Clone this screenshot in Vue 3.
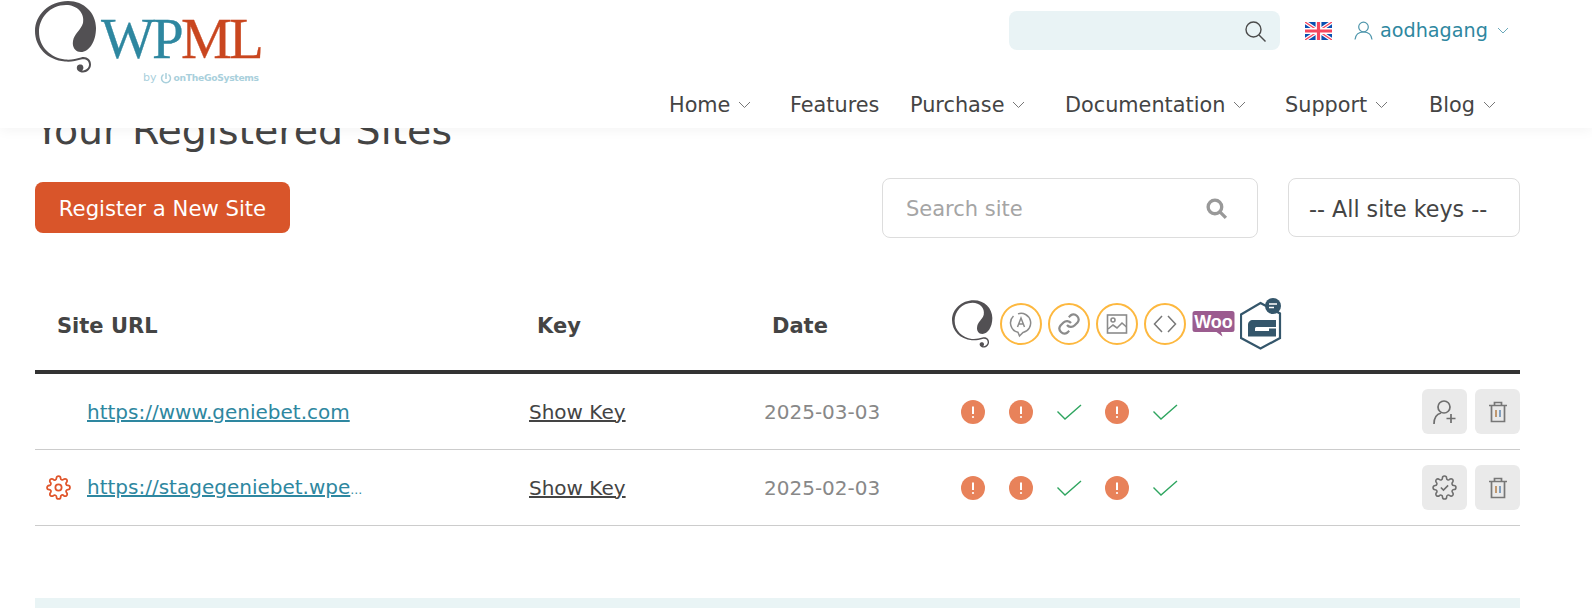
<script setup>
const spiral = "M68 1C84 1 96 13 96 28C96 42 89 52 81 52C75 52 72 47 73 41C74 34 81 30 83 23C85 13 77 5 66 5C50 5 39 18 39 32C39 47 51 58 65 59.500C71 60 76 59 81 57.500C86 56 91 59 91 64.500C91 69 87 72.500 83 72.500C79 72.500 76 70 77 66.500C78 64 82 64 83 66C84 68 83 70 82 70.500C86 70.500 89 68 89 64.500C89 60 85 58.500 81 59.500C76 61 71 62 65 61.500C47 60 35 47 35 31C35 15 49 1 68 1Z";
const gear = "M19.4 15a1.65 1.65 0 0 0 .33 1.82l.06.06a2 2 0 0 1 0 2.83 2 2 0 0 1-2.83 0l-.06-.06a1.65 1.65 0 0 0-1.82-.33 1.65 1.65 0 0 0-1 1.51V21a2 2 0 0 1-2 2 2 2 0 0 1-2-2v-.09A1.65 1.65 0 0 0 9 19.4a1.65 1.65 0 0 0-1.82.33l-.06.06a2 2 0 0 1-2.83 0 2 2 0 0 1 0-2.83l.06-.06a1.65 1.65 0 0 0 .33-1.82 1.65 1.65 0 0 0-1.51-1H3a2 2 0 0 1-2-2 2 2 0 0 1 2-2h.09A1.65 1.65 0 0 0 4.6 9a1.65 1.65 0 0 0-.33-1.82l-.06-.06a2 2 0 0 1 0-2.83 2 2 0 0 1 2.83 0l.06.06a1.65 1.65 0 0 0 1.82.33H9a1.65 1.65 0 0 0 1-1.51V3a2 2 0 0 1 2-2 2 2 0 0 1 2 2v.09a1.65 1.65 0 0 0 1 1.51 1.65 1.65 0 0 0 1.82-.33l.06-.06a2 2 0 0 1 2.83 0 2 2 0 0 1 0 2.83l-.06.06a1.65 1.65 0 0 0-.33 1.82V9a1.65 1.65 0 0 0 1.51 1H21a2 2 0 0 1 2 2 2 2 0 0 1-2 2h-.09a1.65 1.65 0 0 0-1.51 1z";
const nav = [
  { label: "Home", caret: true, w: 121 },
  { label: "Features", caret: false, w: 120 },
  { label: "Purchase", caret: true, w: 155 },
  { label: "Documentation", caret: true, w: 220 },
  { label: "Support", caret: true, w: 144 },
  { label: "Blog", caret: true, w: 0 },
];
const status = ["warn", "warn", "ok", "warn", "ok"];
const sites = [
  { url: "https://www.geniebet.com", more: "", date: "2025-03-03", gear: false },
  { url: "https://stagegeniebet.wpe", more: "…", date: "2025-02-03", gear: true },
];
</script>

<template>
  <div class="page">
    <header class="top">
      <div class="logo">
        <svg class="logo-mark" viewBox="35 0 62 74"><path :d="spiral" fill="#525053" /></svg>
        <div class="logo-word"><span class="wp">WP</span><span class="ml">ML</span></div>
        <div class="logo-by">
          <span class="by">by</span>
          <svg width="12" height="12" viewBox="0 0 12 12" fill="none" stroke="#a9d0dc" stroke-width="1.500"><path d="M3.500 2.500a4.500 4.500 0 1 0 5 0M6 1v6" /></svg>
          <b>onTheGoSystems</b>
        </div>
      </div>
      <div class="top-right">
        <div class="utility">
          <div class="top-search">
            <svg width="24" height="24" viewBox="0 0 24 24" fill="none" stroke="#4b4b4b" stroke-width="1.400"><circle cx="10.500" cy="10.500" r="7.500" /><path d="M16 16l6.500 6.500" /></svg>
          </div>
          <svg class="flag" width="27" height="18" viewBox="0 0 60 40">
            <rect width="60" height="40" fill="#0a4fb0" />
            <path d="M0 0L60 40M60 0L0 40" stroke="#fff" stroke-width="8" />
            <path d="M0 0L60 40M60 0L0 40" stroke="#f5475e" stroke-width="3" />
            <path d="M30 0V40M0 20H60" stroke="#fff" stroke-width="13" />
            <path d="M30 0V40M0 20H60" stroke="#f5475e" stroke-width="7" />
          </svg>
          <svg class="user" width="19" height="19" viewBox="0 0 19 19" fill="none" stroke="#4e96ac" stroke-width="1.200"><circle cx="9.500" cy="6" r="4.800" /><path d="M1 18.500c.5-4.500 3.500-7.500 8.500-7.500s8 3 8.500 7.500" /></svg>
          <span class="username">aodhagang</span>
          <svg class="caret teal" width="12" height="7" viewBox="0 0 12 7" fill="none"><path d="M1 1l5 5 5-5" /></svg>
        </div>
        <nav class="nav">
          <a v-for="n in nav" :key="n.label" class="nav-item" :style="n.w ? { width: n.w + 'px' } : null">
            {{ n.label }}
            <svg v-if="n.caret" class="caret" width="13" height="8" viewBox="0 0 13 8" fill="none"><path d="M1 1l5.500 5.500L12 1" /></svg>
          </a>
        </nav>
      </div>
    </header>

    <main class="content">
      <h1 class="title">Your Registered Sites</h1>
      <div class="tools">
        <button class="register">Register a New Site</button>
        <div class="search">
          <input placeholder="Search site" />
          <svg width="23" height="23" viewBox="0 0 22 22" fill="none" stroke="#999" stroke-width="3.200"><circle cx="9.500" cy="9.500" r="6.500" /><path d="M14.500 14.500l5.500 5.500" /></svg>
        </div>
        <select class="keys"><option>-- All site keys --</option></select>
      </div>

      <div class="thead">
        <div class="th first">Site URL</div>
        <div class="th pad">Key</div>
        <div class="th pad">Date</div>
        <div class="head-icons">
          <svg class="h-spiral" width="41" height="50" viewBox="35 0 62 74"><path :d="spiral" fill="#525053" /></svg>
          <span class="ring">
            <svg width="26" height="28" viewBox="0 0 26 28" fill="none" stroke="#8b8b8b" stroke-width="1.500"><path d="M10 3.900A9.600 9.600 0 1 1 15 22.400L11.500 26 10 22.300A9.600 9.600 0 0 1 5.500 6" /><path d="M9.500 17L13 8l3.500 9M10.800 14h4.400" /></svg>
          </span>
          <span class="ring">
            <svg width="24" height="24" viewBox="0 0 24 24" fill="none" stroke="#8b8b8b" stroke-width="2.200"><path d="M10 13a5 5 0 0 0 7.500.5l3-3a5 5 0 0 0-7-7l-1.700 1.700" /><path d="M14 11a5 5 0 0 0-7.500-.5l-3 3a5 5 0 0 0 7 7l1.700-1.700" /></svg>
          </span>
          <span class="ring">
            <svg width="22" height="22" viewBox="0 0 22 22" fill="none" stroke="#8b8b8b" stroke-width="1.600"><rect x="1.500" y="2" width="19" height="18" /><circle cx="7" cy="7" r="2" /><path d="M2 16l5-4 4 3 5-5 4.500 4" /></svg>
          </span>
          <span class="ring">
            <svg width="24" height="20" viewBox="0 0 24 20" fill="none" stroke="#777" stroke-width="1.500"><path d="M9 2L1.500 10 9 18M15 2l7.500 8L15 18" /></svg>
          </span>
          <svg class="woo" width="43" height="27" viewBox="0 0 43 27">
            <path d="M3 1h37a2.500 2.500 0 0 1 2.500 2.500v16a2.500 2.500 0 0 1-2.500 2.500H29l1.500 4.500-6-4.500H3A2.500 2.500 0 0 1 .5 19.500v-16A2.500 2.500 0 0 1 3 1z" fill="#9b5c8f" />
            <text x="21.500" y="18" text-anchor="middle" class="woo-text">Woo</text>
          </svg>
          <svg class="gf" width="42" height="52" viewBox="0 0 42 52">
            <path d="M20.500 5L40 15.500V40L20.500 50.500 1 40V16.500z" fill="#fff" stroke="#34566b" stroke-width="2.200" />
            <path d="M13 22H36V29H17c-1.500 0-2 .5-2 2V33H29V30.500H36V38.500H8V27c0-3 2-5 5-5z" fill="#34566b" />
            <circle cx="33" cy="8" r="8" fill="#34566b" />
            <path d="M29 6h8M29 9.500h5" stroke="#fff" stroke-width="1.500" />
          </svg>
        </div>
      </div>

      <div v-for="s in sites" :key="s.url" class="row">
        <div class="url-cell">
          <span class="gear-slot">
            <svg v-if="s.gear" width="25" height="25" viewBox="0 0 24 24" fill="none" stroke="#e0552b" stroke-width="1.700"><circle cx="12" cy="12" r="3" /><path :d="gear" /></svg>
          </span>
          <a class="url">{{ s.url }}</a><span class="url-more">{{ s.more }}</span>
        </div>
        <div><a class="showkey">Show Key</a></div>
        <div class="date">{{ s.date }}</div>
        <div class="statuses">
          <span v-for="(st, i) in status" :key="i" class="slot">
            <svg v-if="st === 'warn'" width="24" height="24" viewBox="0 0 24 24"><circle cx="12" cy="12" r="12" fill="#e8825a" /><path d="M12 6.500v7.500" stroke="#fff" stroke-width="2" /><circle cx="12" cy="17" r="1.100" fill="#fff" /></svg>
            <svg v-else width="26" height="18" viewBox="0 0 26 18" fill="none" stroke="#2ea55f" stroke-width="1.400"><path d="M1.500 8.500L9 16 25 2" /></svg>
          </span>
        </div>
        <div class="actions">
          <span class="act">
            <svg v-if="!s.gear" width="26" height="26" viewBox="0 0 26 26" fill="none" stroke="#6e6e6e" stroke-width="1.700"><circle cx="12" cy="8" r="6" /><path d="M2 25c0-6 3-10 7-11M19 15v9M14.500 19.500h9" /></svg>
            <svg v-else width="25" height="25" viewBox="0 0 24 24" fill="none" stroke="#6e6e6e" stroke-width="1.500"><path :d="gear" /><path d="M8.500 12l2.500 2.500 4.500-4.500" /></svg>
          </span>
          <span class="act">
            <svg width="20" height="22" viewBox="0 0 20 22" fill="none" stroke="#777" stroke-width="1.700"><path d="M1 4.500h18M6.500 4V1.500h7V4M3.500 4.500V20.500h13V4.500" /><path d="M8 9v7" stroke="#b98a5a" /><path d="M12 9v7" stroke="#6f93b8" /></svg>
          </span>
        </div>
      </div>

      <div class="panel"></div>
    </main>
  </div>
</template>

<style>
html, body { margin: 0; background: #fff; }
</style>

<style scoped>
.page {
  position: relative;
  height: 608px;
  overflow: hidden;
  font-family: "DejaVu Sans", sans-serif;
  color: #444;
  background: #fff;
}
.top {
  position: absolute;
  top: 0;
  left: 0;
  right: 0;
  height: 128px;
  background: #fff;
  box-shadow: 0 2px 12px rgba(0, 0, 0, 0.05);
  z-index: 2;
  display: flex;
  justify-content: space-between;
}
.logo {
  position: relative;
  width: 300px;
  flex: none;
}
.logo-mark {
  position: absolute;
  left: 35px;
  top: 0;
  width: 62px;
  height: 74px;
}
.logo-word {
  position: absolute;
  left: 101px;
  top: 8px;
  font: 57px/1.100 "Liberation Serif", serif;
  letter-spacing: -2.700px;
  -webkit-text-stroke: 0.300px currentColor;
  white-space: nowrap;
}
.wp { color: #2e87a0; }
.ml { color: #c9461f; }
.logo-by {
  position: absolute;
  left: 143px;
  top: 71px;
  display: flex;
  align-items: center;
  gap: 2px;
  font-size: 11px;
  color: #a9d0dc;
  white-space: nowrap;
}
.logo-by .by { margin-right: 1px; }
.logo-by b { font-size: 9.200px; letter-spacing: -0.300px; }
.top-right {
  width: 592px;
  flex: none;
  position: relative;
}
.utility {
  display: flex;
  align-items: center;
  height: 39px;
  margin-top: 11px;
  margin-left: 9px;
}
.top-search {
  width: 271px;
  height: 39px;
  background: #e9f3f5;
  border-radius: 8px;
  display: flex;
  align-items: center;
  justify-content: flex-end;
  padding-right: 13px;
  box-sizing: border-box;
  margin-right: 25px;
}
.flag { margin-right: 22px; }
.user { margin-right: 7px; }
.username {
  font-size: 19.200px;
  color: #2e87a0;
  margin-right: 9px;
}
.caret { stroke: #777; stroke-width: 1; }
.caret.teal { stroke: #6aa8ba; }
.nav {
  display: flex;
  margin-top: 40px;
  margin-left: -331px;
  height: 30px;
  align-items: center;
  position: relative;
}
.nav-item {
  flex: none;
  display: flex;
  align-items: center;
  gap: 8px;
  font-size: 20.800px;
  color: #444;
  white-space: nowrap;
}
.content {
  width: 1485px;
  margin-left: 35px;
}
.title {
  margin: 0;
  padding-top: 105px;
  font-weight: 400;
  font-size: 39.500px;
  line-height: 50px;
  color: #444;
}
.tools {
  display: flex;
  align-items: flex-start;
  margin-top: 23px;
}
.register {
  width: 255px;
  height: 51px;
  margin-top: 4px;
  border: 0;
  border-radius: 8px;
  background: #d9552a;
  color: #fff;
  font: 21.200px "DejaVu Sans", sans-serif;
  padding: 1px 0 0;
}
.search {
  margin-left: 592px;
  width: 376px;
  height: 60px;
  box-sizing: border-box;
  border: 1px solid #ddd;
  border-radius: 8px;
  display: flex;
  align-items: center;
  padding: 0 29px 0 23px;
}
.search input {
  flex: 1;
  min-width: 0;
  border: 0;
  outline: 0;
  background: transparent;
  font: 21px "DejaVu Sans", sans-serif;
  padding: 2px 0 0;
  color: #444;
}
.search input::placeholder { color: #a5a5a5; opacity: 1; }
.keys {
  margin-left: 30px;
  width: 232px;
  height: 59px;
  box-sizing: border-box;
  border: 1px solid #ddd;
  border-radius: 8px;
  background: #fff;
  appearance: none;
  padding: 2px 0 0 20px;
  font: 22.200px "DejaVu Sans", sans-serif;
  color: #444;
}
.thead {
  display: grid;
  grid-template-columns: 494px 235px 186px 1fr;
  align-items: center;
  height: 136px;
  padding-top: 44px;
  border-bottom: 4px solid #333;
  box-sizing: border-box;
}
.th {
  font-size: 21px;
  font-weight: 700;
  color: #444;
}
.th.first { padding-left: 22px; }
.th.pad { padding-left: 8px; }
.head-icons {
  display: flex;
  align-items: center;
  padding-left: 2px;
  margin-top: -5px;
}
.h-spiral { margin-right: 7px; flex: none; }
.ring {
  flex: none;
  width: 42px;
  height: 42px;
  box-sizing: border-box;
  border: 2.500px solid #fdb83f;
  border-radius: 50%;
  margin-right: 6px;
  display: flex;
  align-items: center;
  justify-content: center;
}
.woo { flex: none; margin-right: 5px; }
.woo-text {
  font-family: "Liberation Sans", sans-serif;
  font-weight: 700;
  font-size: 18px;
  fill: #fff;
}
.gf { flex: none; }
.row {
  display: grid;
  grid-template-columns: 494px 235px 185px 1fr auto;
  align-items: center;
  height: 76px;
  border-bottom: 1px solid #ccc;
  box-sizing: border-box;
  font-size: 20px;
}
.url-cell { display: flex; align-items: baseline; white-space: nowrap; }
.gear-slot {
  width: 52px;
  flex: none;
  display: flex;
  padding-left: 11px;
  box-sizing: border-box;
  align-self: center;
}
.url {
  color: #2e87a0;
  text-decoration: underline;
}
.url-more { color: #2e87a0; font-size: 12px; }
.showkey { color: #444; text-decoration: underline; }
.date { color: #888; }
.statuses { display: flex; }
.slot {
  width: 48px;
  display: flex;
  align-items: center;
  justify-content: center;
}
.actions { display: flex; gap: 8px; }
.act {
  width: 45px;
  height: 45px;
  background: #eaeaea;
  border-radius: 6px;
  display: flex;
  align-items: center;
  justify-content: center;
}
.panel {
  margin-top: 72px;
  height: 60px;
  background: #e9f4f5;
}
</style>
